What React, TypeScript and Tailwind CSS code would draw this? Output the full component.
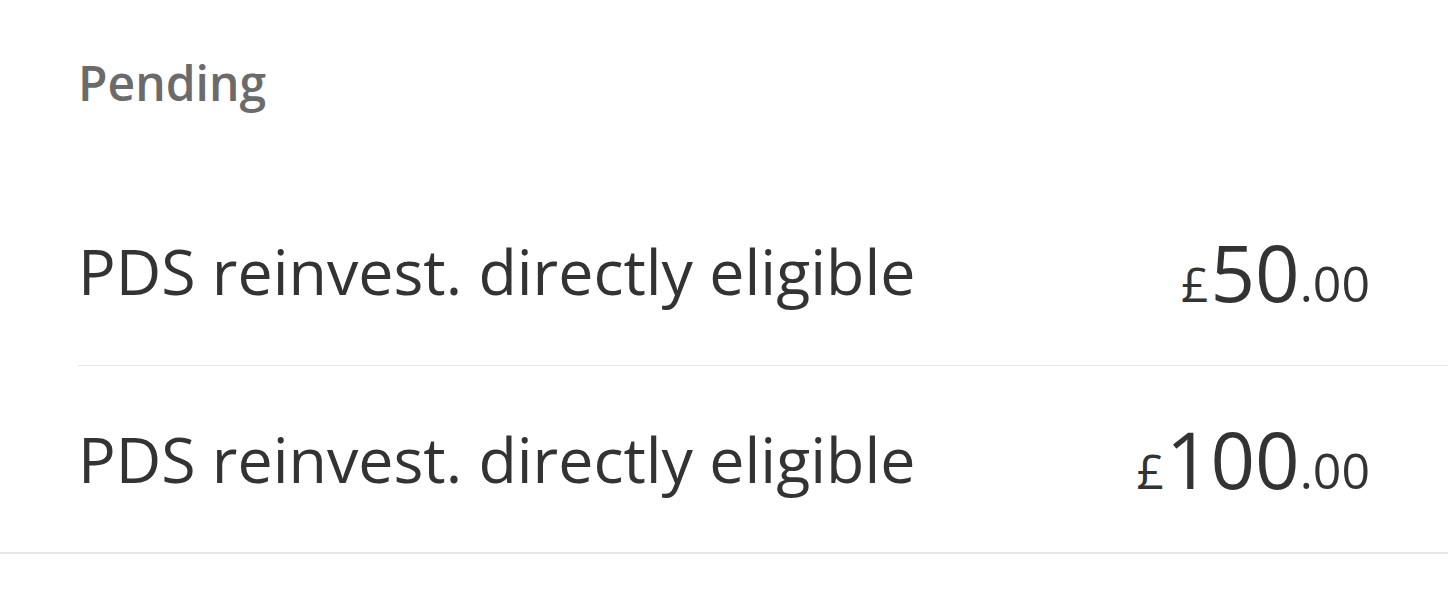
import React from "react";

const rows = [
  { label: "PDS reinvest. directly eligible", whole: "50", dec: "00" },
  { label: "PDS reinvest. directly eligible", whole: "100", dec: "00" },
];

export default function App() {
  return (
    <div className="w-[1448px] h-[600px] bg-white" style={{ fontFamily: '"Open Sans", sans-serif' }}>
      <div className="pl-[78px] pt-[52px] h-[178px]">
        <div className="text-[48px] leading-[62px] font-semibold text-[#6b6b6b]">Pending</div>
      </div>
      <div className="pl-[78px]">
        {rows.map((r, i) => (
          <div
            key={i}
            className={
              "flex items-center justify-between pr-[78px] h-[188px] " +
              (i === 0 ? "border-b border-[#e3e6ea]" : "border-b-2 border-[#e3e6ea] -ml-[78px] pl-[78px]")
            }
          >
            <span className="text-[62.7px] text-[#333333] leading-none">{r.label}</span>
            <span className="text-[#333333] leading-none flex items-baseline">
              <span className="text-[48px] mr-[2px]">£</span>
              <span className="text-[78px]">{r.whole}</span>
              <span className="text-[50px]">.{r.dec}</span>
            </span>
          </div>
        ))}
      </div>
    </div>
  );
}
